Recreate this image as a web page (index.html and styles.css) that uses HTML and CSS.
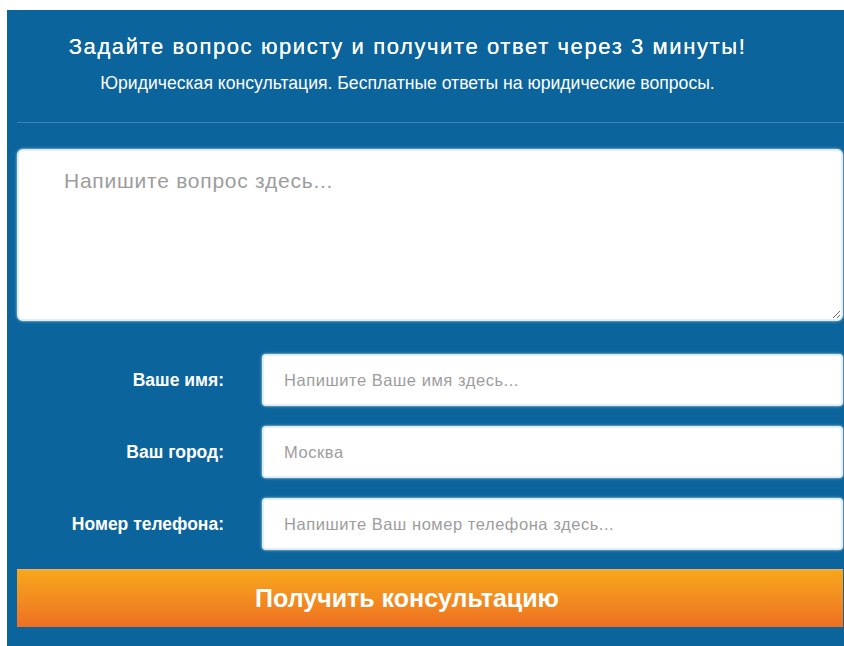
FILE: index.html
```html
<!DOCTYPE html>
<html lang="ru">
<head>
<meta charset="utf-8">
<title>Юридическая консультация</title>
<link rel="stylesheet" href="styles.css">
</head>
<body>
<div class="panel">
  <header class="head">
    <h1 class="head-title">Задайте вопрос юристу и получите ответ через 3 минуты!</h1>
    <p class="head-sub">Юридическая консультация. Бесплатные ответы на юридические вопросы.</p>
  </header>
  <form class="form">
    <textarea class="question" placeholder="Напишите вопрос здесь..."></textarea>
    <div class="fields">
      <label class="field-label" for="name">Ваше имя:</label>
      <input class="field-input" id="name" type="text" placeholder="Напишите Ваше имя здесь...">
      <label class="field-label" for="city">Ваш город:</label>
      <input class="field-input" id="city" type="text" placeholder="Москва">
      <label class="field-label" for="phone">Номер телефона:</label>
      <input class="field-input" id="phone" type="text" placeholder="Напишите Ваш номер телефона здесь...">
    </div>
    <button class="submit" type="button">Получить консультацию</button>
  </form>
</div>
</body>
</html>
```

FILE: styles.css
```css
html, body {
  margin: 0;
  background: #ffffff;
}

body {
  padding: 10px 0 0 7px;
  font-family: "Liberation Sans", Arial, sans-serif;
}

.panel {
  background: #0b649c;
  padding: 0 1px 19px 10px;
  min-height: 636px;
  box-sizing: border-box;
}

/* heading block with a thin rule under it */
.head {
  margin-right: -1px;
  padding: 25px 0 29px;
  text-align: center;
  color: #ffffff;
  border-bottom: 1px solid #3784b3;
}

.head-title {
  margin: 0 46px 0 0;
  font-size: 22px;
  line-height: 24px;
  font-weight: normal;
  letter-spacing: 1.6px;
  text-shadow: 0 0 0.4px #ffffff;
}

.head-sub {
  margin: 14px 46px 0 0;
  font-size: 17.6px;
  line-height: 20px;
}

.form {
  padding-top: 26px;
}

.question {
  display: block;
  width: 100%;
  height: 172px;
  box-sizing: border-box;
  padding: 18px 45px;
  border: 2px solid #e2eef6;
  border-radius: 6px;
  background: #ffffff;
  box-shadow: 0 0 3px rgba(205, 228, 242, 0.9);
  font-family: "Liberation Sans", Arial, sans-serif;
  font-size: 21px;
  letter-spacing: 0.75px;
  color: #333;
  resize: vertical;
}

.question::placeholder,
.field-input::placeholder {
  color: #9d9d9d;
}

.fields {
  display: grid;
  grid-template-columns: 207px 1fr;
  column-gap: 38px;
  row-gap: 20px;
  align-items: center;
  margin-top: 33px;
}

.field-label {
  text-align: right;
  color: #ffffff;
  font-weight: bold;
  font-size: 17.5px;
}

.field-input {
  height: 52px;
  box-sizing: border-box;
  padding: 0 20px;
  border: 2px solid #e2eef6;
  border-radius: 4px;
  background: #ffffff;
  box-shadow: 0 0 3px rgba(205, 228, 242, 0.9);
  font-family: "Liberation Sans", Arial, sans-serif;
  font-size: 16.5px;
  letter-spacing: 0.55px;
  color: #333;
}

.submit {
  display: block;
  width: 100%;
  height: 58px;
  margin-top: 19px;
  padding: 0 46px 0 0;
  border: 0;
  border-top: 1px solid #f6b062;
  background: linear-gradient(#f8a71d, #f28a20 55%, #ee6f22);
  color: #ffffff;
  font-family: "Liberation Sans", Arial, sans-serif;
  font-weight: bold;
  font-size: 25px;
  cursor: pointer;
}
```
